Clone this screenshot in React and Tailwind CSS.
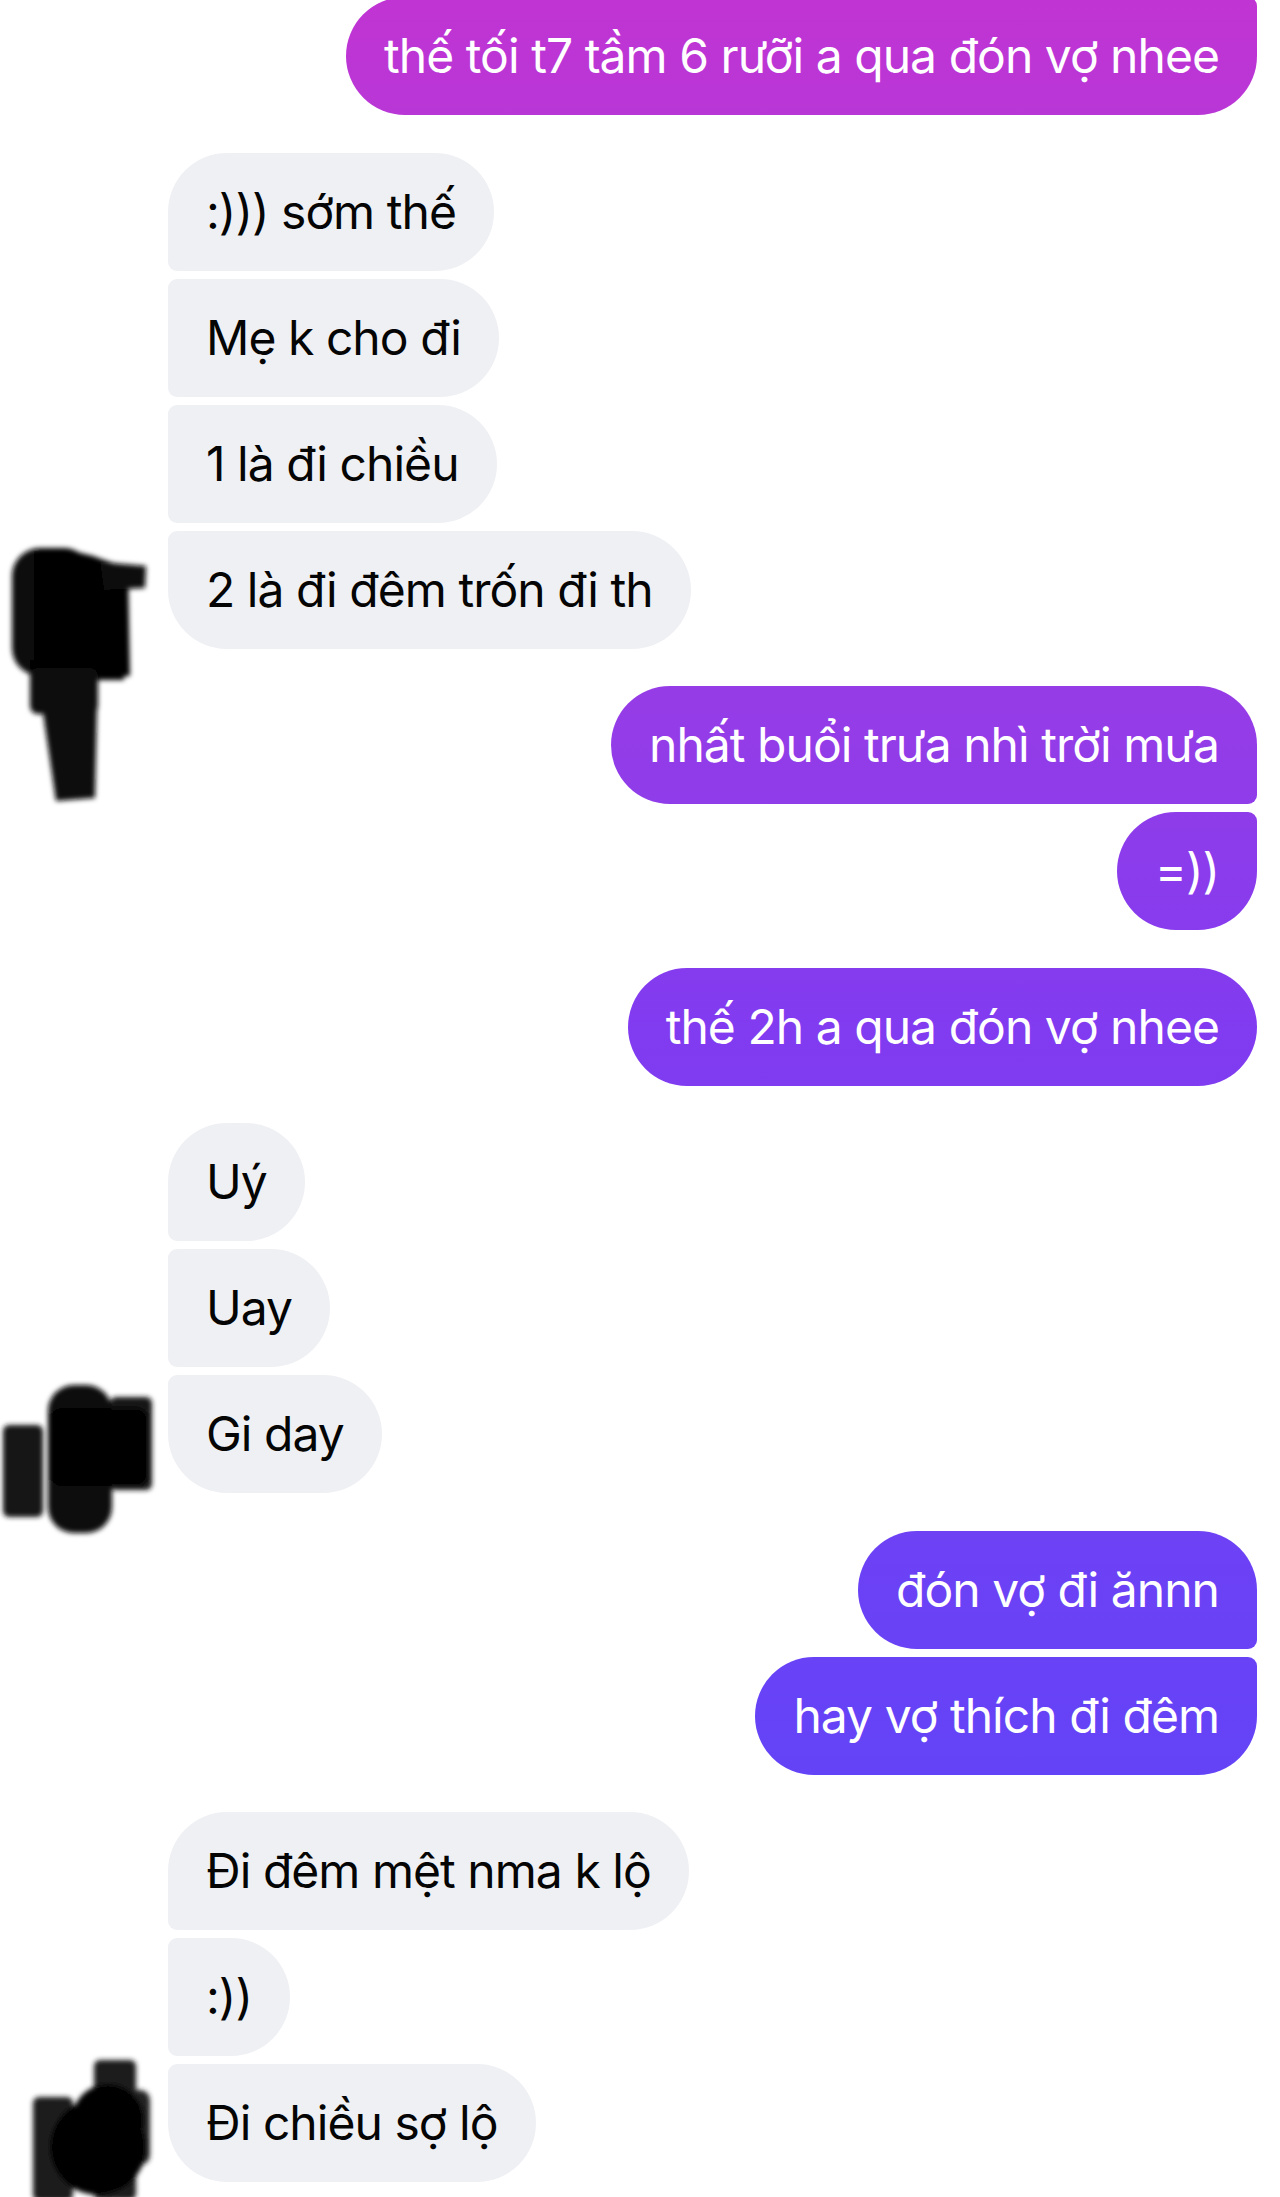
const groups = [
  { me: true, msgs: ["thế tối t7 tầm 6 rưỡi a qua đón vợ nhee"], cutTop: true },
  { me: false, avatar: 1, msgs: [":))) sớm thế", "Mẹ k cho đi", "1 là đi chiều", "2 là đi đêm trốn đi th"] },
  { me: true, msgs: ["nhất buổi trưa nhì trời mưa", "=))"] },
  { me: true, msgs: ["thế 2h a qua đón vợ nhee"] },
  { me: false, avatar: 2, msgs: ["Uý", "Uay", "Gi day"] },
  { me: true, msgs: ["đón vợ đi ănnn", "hay vợ thích đi đêm"] },
  { me: false, avatar: 3, msgs: ["Đi đêm mệt nma k lộ", ":))", "Đi chiều sợ lộ"] },
];

// corner shape depends on where the bubble sits in its run
function corners(me, i, n, cutTop) {
  if (cutTop) return "rounded-[59px] rounded-tr-[9px]";
  if (n === 1) return "rounded-[59px]";
  const pos = i === 0 ? "first" : i === n - 1 ? "last" : "mid";
  if (me) {
    if (pos === "first") return "rounded-[59px] rounded-br-[9px]";
    if (pos === "last") return "rounded-[59px] rounded-tr-[9px]";
    return "rounded-[59px] rounded-r-[9px]";
  }
  if (pos === "first") return "rounded-[59px] rounded-bl-[9px]";
  if (pos === "last") return "rounded-[59px] rounded-tl-[9px]";
  return "rounded-[59px] rounded-l-[9px]";
}

function Bubble({ text, me, shape }) {
  return (
    <div
      className={
        "h-[118px] flex items-center px-[38px] text-[48px] leading-none whitespace-nowrap tracking-[-0.02em] " +
        shape +
        (me
          ? " text-white bg-fixed bg-linear-to-b from-[#c034d3] via-[#813bf0] via-47% to-[#5046fb]"
          : " text-[#050505] bg-[#eff0f4]")
      }
    >
      {text}
    </div>
  );
}

// scribbled-out avatars, drawn in page coordinates through the viewBox
function Scribble({ n }) {
  if (n === 1)
    return (
      <svg className="absolute left-0 top-[387px]" width="160" height="270" viewBox="0 540 160 270">
        <defs><filter id="b1"><feGaussianBlur stdDeviation="2.5" /></filter></defs>
        <g filter="url(#b1)">
          <rect x="12" y="548" width="80" height="128" rx="28" fill="#111" />
          <path d="M34 552 Q70 546 104 560 L128 568 L130 676 L34 676 Z" fill="#000" />
          <polygon points="100,562 146,566 145,588 104,590" fill="#0a0a0a" />
          <rect x="30" y="660" width="94" height="20" fill="#000" />
          <rect x="30" y="668" width="68" height="46" rx="8" fill="#0a0a0a" />
          <polygon points="42,706 97,706 95,798 56,801" fill="#111" />
        </g>
      </svg>
    );
  if (n === 2)
    return (
      <svg className="absolute left-0 top-[257px]" width="160" height="160" viewBox="0 1380 160 160">
        <defs><filter id="b2"><feGaussianBlur stdDeviation="2.5" /></filter></defs>
        <g filter="url(#b2)">
          <rect x="3" y="1425" width="40" height="92" rx="6" fill="#181818" />
          <rect x="110" y="1397" width="42" height="93" rx="6" fill="#161616" />
          <rect x="48" y="1385" width="64" height="148" rx="26" fill="#0c0c0c" />
          <rect x="50" y="1408" width="98" height="78" rx="12" fill="#000" />
        </g>
      </svg>
    );
  return (
    <svg className="absolute left-0 top-[238px]" width="160" height="150" viewBox="0 2050 160 150">
      <defs><filter id="b3"><feGaussianBlur stdDeviation="2.5" /></filter></defs>
      <g filter="url(#b3)">
        <rect x="33" y="2097" width="40" height="104" rx="6" fill="#1c1c1c" />
        <rect x="94" y="2060" width="42" height="140" rx="6" fill="#1a1a1a" />
        <rect x="118" y="2090" width="32" height="75" rx="10" fill="#222" />
        <ellipse cx="108" cy="2120" rx="36" ry="36" fill="#000" />
        <circle cx="98" cy="2147" r="48" fill="#030303" />
      </g>
    </svg>
  );
}

export default function App() {
  return (
    <div className="relative w-[1280px] h-[2197px] overflow-hidden bg-white font-[Inter,'Noto_Sans',sans-serif]">
      <div className="flex flex-col gap-[37.5px] -mt-[3px]">
        {groups.map((g, gi) =>
          g.me ? (
            <div key={gi} className="flex flex-col items-end gap-[8px] pr-[23px]">
              {g.msgs.map((m, i) => (
                <Bubble key={i} me text={m} shape={corners(true, i, g.msgs.length, g.cutTop)} />
              ))}
            </div>
          ) : (
            <div key={gi} className="flex">
              <div className="relative w-[168px] shrink-0">
                <Scribble n={g.avatar} />
              </div>
              <div className="flex flex-col items-start gap-[8px]">
                {g.msgs.map((m, i) => (
                  <Bubble key={i} text={m} shape={corners(false, i, g.msgs.length)} />
                ))}
              </div>
            </div>
          )
        )}
      </div>
    </div>
  );
}
